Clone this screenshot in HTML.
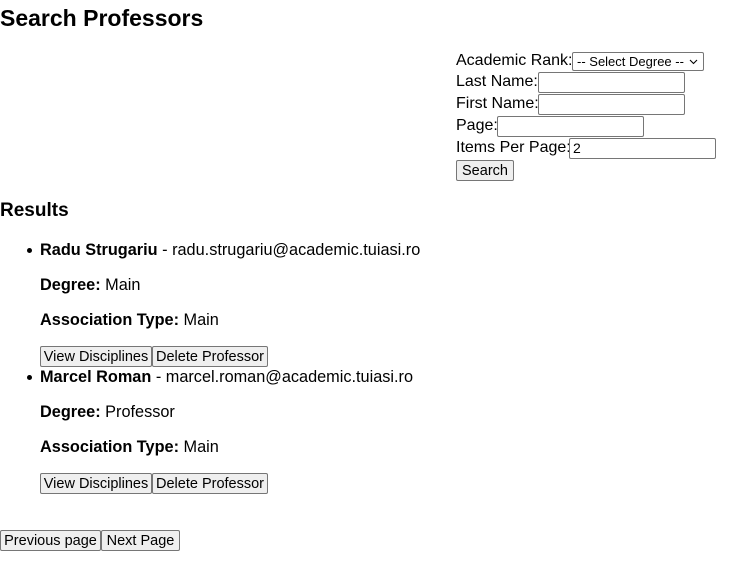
<!DOCTYPE html>
<html><head><meta charset="utf-8"><style>
body{margin:0;width:736px;height:579px;font-family:"Liberation Sans",Arial,sans-serif;font-size:16.3px;color:#000;background:#fff;position:relative;overflow:hidden}
.a{position:absolute;white-space:nowrap;line-height:20px}
.f{font-size:16px}
.btn{position:absolute;box-sizing:border-box;height:21px;border:1px solid #767676;border-radius:2px;background:#efefef;font-size:14.5px;line-height:19px;padding:1px 0 0;text-align:center;white-space:nowrap;overflow:hidden;font-family:"Liberation Sans",Arial,sans-serif}
.inp{position:absolute;box-sizing:border-box;height:21px;border:1px solid #767676;border-radius:2px;background:#fff;font-size:14px;line-height:19px;padding:0 3px;white-space:nowrap}
h1{position:absolute;margin:0;left:0;top:4px;font-size:23px;line-height:28px}
h3{position:absolute;margin:0;left:0;top:200px;font-size:19px;line-height:22px}
.dot{position:absolute;width:5px;height:5px;border-radius:50%;background:#000}
</style></head><body>
<h1>Search Professors</h1>
<div class="a f" style="left:456px;top:51px">Academic Rank:</div>
<div class="inp" style="left:572px;top:52px;width:132px;height:19px;font-size:13px;line-height:17px;padding:0 4px">-- Select Degree --<svg style="position:absolute;right:5px;top:6px" width="9" height="6" viewBox="0 0 9 6"><path d="M1 1l3.5 3.5L8 1" fill="none" stroke="#000" stroke-width="1.1"/></svg></div>
<div class="a f" style="left:456px;top:72px">Last Name:</div>
<div class="inp" style="left:538px;top:72px;width:147px"></div>
<div class="a f" style="left:456px;top:94px">First Name:</div>
<div class="inp" style="left:538px;top:94px;width:147px"></div>
<div class="a f" style="left:456px;top:116px">Page:</div>
<div class="inp" style="left:497px;top:116px;width:147px"></div>
<div class="a f" style="left:456px;top:138px">Items Per Page:</div>
<div class="inp" style="left:569px;top:138px;width:147px">2</div>
<div class="btn" style="left:456px;top:160px;width:58px">Search</div>
<h3>Results</h3>
<div class="dot" style="left:27px;top:248px"></div>
<div class="a" style="left:40px;top:240px"><b>Radu Strugariu</b> - radu.strugariu@academic.tuiasi.ro</div>
<div class="a" style="left:40px;top:275px"><b>Degree:</b> Main</div>
<div class="a" style="left:40px;top:310px"><b>Association Type:</b> Main</div>
<div class="btn" style="left:40px;top:346px;width:112px">View Disciplines</div>
<div class="btn" style="left:152px;top:346px;width:116px">Delete Professor</div>
<div class="dot" style="left:27px;top:375px"></div>
<div class="a" style="left:40px;top:367px"><b>Marcel Roman</b> - marcel.roman@academic.tuiasi.ro</div>
<div class="a" style="left:40px;top:402px"><b>Degree:</b> Professor</div>
<div class="a" style="left:40px;top:437px"><b>Association Type:</b> Main</div>
<div class="btn" style="left:40px;top:473px;width:112px">View Disciplines</div>
<div class="btn" style="left:152px;top:473px;width:116px">Delete Professor</div>
<div class="btn" style="left:0;top:530px;width:101px">Previous page</div>
<div class="btn" style="left:101px;top:530px;width:79px">Next Page</div>
</body></html>
